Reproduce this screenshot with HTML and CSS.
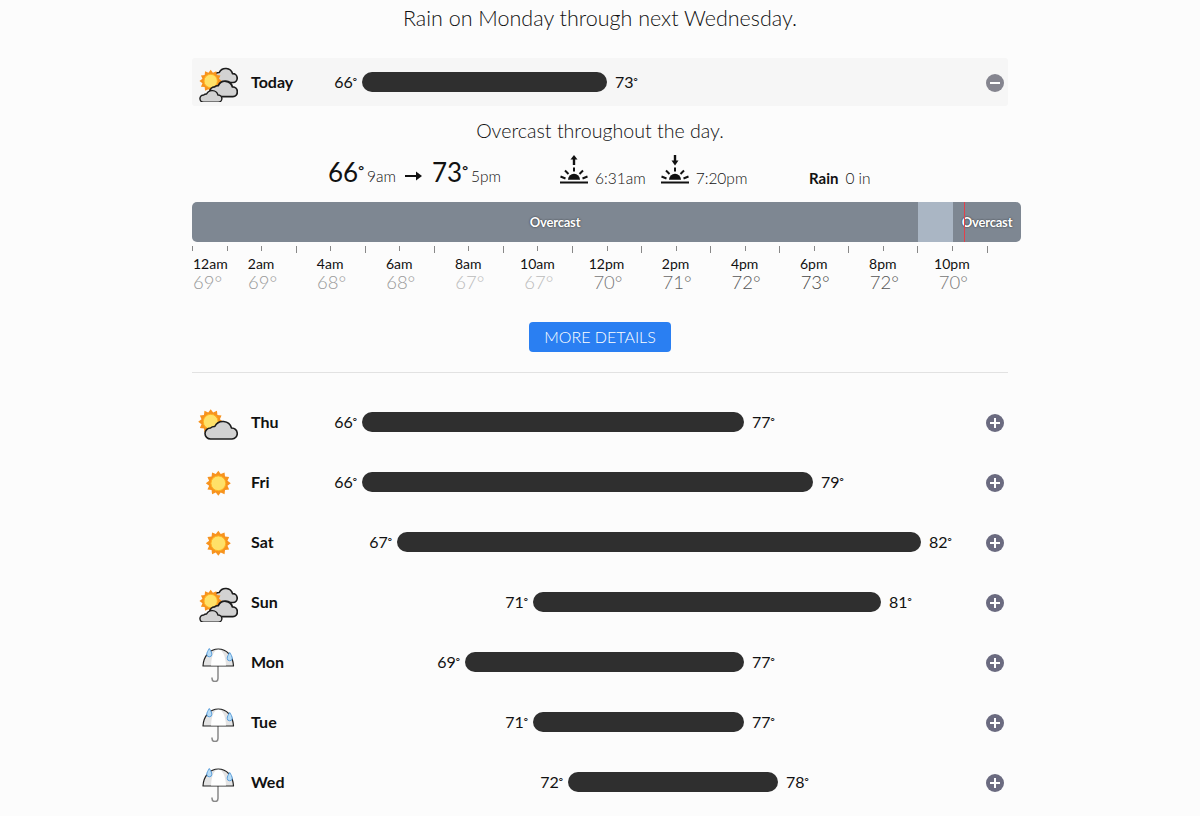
FILE: index.html
```html
<!DOCTYPE html>
<html lang="en">
<head>
    <meta charset="UTF-8">
    <title>Forecast</title>
    <link rel="stylesheet" href="styles.css">
</head>
<body>
    <svg class="defs" width="0" height="0">
        <defs>
            <polygon id="spikes" points="12.5,0 9.18,2.46 10.83,6.25 6.72,6.72 6.25,10.83 2.46,9.18 0,12.5 -2.46,9.18 -6.25,10.83 -6.72,6.72 -10.83,6.25 -9.18,2.46 -12.5,0 -9.18,-2.46 -10.83,-6.25 -6.72,-6.72 -6.25,-10.83 -2.46,-9.18 0,-12.5 2.46,-9.18 6.25,-10.83 6.72,-6.72 10.83,-6.25 9.18,-2.46"/>
            <g id="sun">
                <use href="#spikes" fill="#f7931e"/>
                <circle r="7.4" fill="#ffe168" stroke="#ffb21e"/>
            </g>
            <path id="cloud" d="M6 20H27.500A5.500 5.500 0 0 0 27 9A9 9 0 0 0 10.300 7.500A5.600 5.600 0 0 0 6 9A5.500 5.500 0 0 0 6 20Z" fill="#d2d2d2" stroke="#1c1c1c" stroke-width="1.6" stroke-linejoin="round"/>
            <path id="cloud-thick" d="M6 20H27.500A5.500 5.500 0 0 0 27 9A9 9 0 0 0 10.300 7.500A5.600 5.600 0 0 0 6 9A5.500 5.500 0 0 0 6 20Z" fill="#d2d2d2" stroke="#1c1c1c" stroke-width="2.100" stroke-linejoin="round"/>
            <g id="partly">
                <use href="#sun" transform="translate(12.7 19.7)"/>
                <use href="#cloud" transform="translate(6.500 17)"/>
            </g>
            <g id="clear">
                <use href="#sun" transform="translate(20.3 21.3)"/>
            </g>
            <g id="mostly">
                <use href="#cloud-thick" transform="translate(13 4.500) scale(.8)"/>
                <use href="#sun" transform="translate(12.7 19) scale(.9)"/>
                <use href="#cloud-thick" transform="translate(11.500 17) scale(.85 .88)"/>
                <use href="#cloud-thick" transform="translate(1.600 27) scale(.68 .66)"/>
            </g>
            <g id="umbrella">
                <path d="M20 24V36.500A3 3 0 0 1 14 36.500V35.500" fill="none" stroke="#888" stroke-width="1.500"/>
                <path d="M5 24C5.500 14 12 7 20.300 7S35 14 35.500 24Z" fill="#e4e4e4" stroke="#222" stroke-width="1.200" stroke-linejoin="round"/>
                <path d="M13 23.400C13.500 14 16 7.800 20.300 7.800S27.500 14 28 23.400Z" fill="#fff"/>
                <path d="M11.300 6.500C9.800 9 8.800 10.500 8.800 12.300A2.500 2.500 0 0 0 13.800 12.300C13.800 10.500 12.800 9 11.300 6.500Z" fill="#b9dcf5" stroke="#5a9fdc"/>
                <path d="M31.700 10.500C30.200 13 29.200 14.500 29.200 16.300A2.500 2.500 0 0 0 34.200 16.300C34.200 14.500 33.200 13 31.700 10.500Z" fill="#b9dcf5" stroke="#5a9fdc"/>
            </g>
            <g id="horizon">
                <path d="M0 27.500H28" stroke="#111" stroke-width="2"/>
                <path d="M8 24.800A6 6 0 0 1 20 24.800Z" fill="#111"/>
                <path d="M14 12.500V16.500M5 15.500L8.500 19M23 15.500L19.500 19M.5 21.500L5.500 23.500M27.500 21.500L22.500 23.500" stroke="#111" stroke-width="2"/>
            </g>
        </defs>
    </svg>

    <h1 class="headline">Rain on Monday through next Wednesday.</h1>

    <div class="forecast">
        <div class="day-row today-row">
            <svg class="wx-icon"><use href="#mostly"/></svg>
            <span class="day-name">Today</span>
            <span class="temp low" style="width:57px">66<i>°</i></span>
            <span class="bar" style="width:245px"></span>
            <span class="temp high">73<i>°</i></span>
            <span class="toggle minus"></span>
        </div>

        <div class="details">
            <p class="day-summary">Overcast throughout the day.</p>

            <div class="stats">
                <div class="stat-temps">
                    <span class="big-temp">66<i>°</i></span>
                    <span class="stat-time">9am</span>
                    <svg class="arrow" width="17" height="12"><path d="M0 6H14" stroke="#111" stroke-width="2"/><path d="M11 1.500L17 6L11 10.500Z" fill="#111"/></svg>
                    <span class="big-temp">73<i>°</i></span>
                    <span class="stat-time">5pm</span>
                </div>
                <div class="stat-sun">
                    <svg class="sun-icon"><use href="#horizon"/><path d="M14 10V3" stroke="#111" stroke-width="2.400"/><path d="M10.500 4.500L14 0L17.500 4.500Z" fill="#111"/></svg>
                    <span class="stat-time">6:31am</span>
                    <svg class="sun-icon sunset"><use href="#horizon"/><path d="M14 0V7" stroke="#111" stroke-width="2.400"/><path d="M10.500 5.500L14 10.500L17.500 5.500Z" fill="#111"/></svg>
                    <span class="stat-time">7:20pm</span>
                </div>
                <div class="stat-rain">
                    <b>Rain</b>
                    <span class="stat-time">0 in</span>
                </div>
            </div>

            <div class="timeline">
                <div class="segments">
                    <div class="segment dark" style="width:726px">Overcast</div>
                    <div class="segment light" style="width:35px"></div>
                    <div class="segment dark" style="width:68px">Overcast</div>
                    <span class="now-line"></span>
                </div>
                <div class="ticks">
                    <span class="tick"></span><span class="tick"></span><span class="tick"></span><span class="tick tall"></span>
                    <span class="tick"></span><span class="tick tall"></span><span class="tick"></span><span class="tick tall"></span>
                    <span class="tick"></span><span class="tick tall"></span><span class="tick"></span><span class="tick tall"></span>
                    <span class="tick"></span><span class="tick tall"></span><span class="tick"></span><span class="tick tall"></span>
                    <span class="tick"></span><span class="tick tall"></span><span class="tick"></span><span class="tick tall"></span>
                    <span class="tick"></span><span class="tick tall"></span><span class="tick"></span><span class="tick tall"></span>
                </div>
                <div class="hours">
                    <div class="hour first"><span>12am</span><b class="shade-a">69°</b></div>
                    <div class="hour"><span>2am</span><b class="shade-a">69°</b></div>
                    <div class="hour"><span>4am</span><b class="shade-a">68°</b></div>
                    <div class="hour"><span>6am</span><b class="shade-a">68°</b></div>
                    <div class="hour"><span>8am</span><b class="shade-b">67°</b></div>
                    <div class="hour"><span>10am</span><b class="shade-b">67°</b></div>
                    <div class="hour"><span>12pm</span><b class="shade-c">70°</b></div>
                    <div class="hour"><span>2pm</span><b class="shade-d">71°</b></div>
                    <div class="hour"><span>4pm</span><b class="shade-e">72°</b></div>
                    <div class="hour"><span>6pm</span><b class="shade-f">73°</b></div>
                    <div class="hour"><span>8pm</span><b class="shade-e">72°</b></div>
                    <div class="hour"><span>10pm</span><b class="shade-c">70°</b></div>
                </div>
            </div>

            <div class="more-wrap"><button class="more-btn">MORE DETAILS</button></div>
        </div>

        <hr class="divider">

        <div class="day-row">
            <svg class="wx-icon"><use href="#partly"/></svg>
            <span class="day-name">Thu</span>
            <span class="temp low" style="width:57px">66<i>°</i></span>
            <span class="bar" style="width:382px"></span>
            <span class="temp high">77<i>°</i></span>
            <span class="toggle plus"></span>
        </div>
        <div class="day-row">
            <svg class="wx-icon"><use href="#clear"/></svg>
            <span class="day-name">Fri</span>
            <span class="temp low" style="width:57px">66<i>°</i></span>
            <span class="bar" style="width:451px"></span>
            <span class="temp high">79<i>°</i></span>
            <span class="toggle plus"></span>
        </div>
        <div class="day-row">
            <svg class="wx-icon"><use href="#clear"/></svg>
            <span class="day-name">Sat</span>
            <span class="temp low" style="width:92px">67<i>°</i></span>
            <span class="bar" style="width:524px"></span>
            <span class="temp high">82<i>°</i></span>
            <span class="toggle plus"></span>
        </div>
        <div class="day-row">
            <svg class="wx-icon"><use href="#mostly"/></svg>
            <span class="day-name">Sun</span>
            <span class="temp low" style="width:228px">71<i>°</i></span>
            <span class="bar" style="width:348px"></span>
            <span class="temp high">81<i>°</i></span>
            <span class="toggle plus"></span>
        </div>
        <div class="day-row">
            <svg class="wx-icon"><use href="#umbrella"/></svg>
            <span class="day-name">Mon</span>
            <span class="temp low" style="width:160px">69<i>°</i></span>
            <span class="bar" style="width:279px"></span>
            <span class="temp high">77<i>°</i></span>
            <span class="toggle plus"></span>
        </div>
        <div class="day-row">
            <svg class="wx-icon"><use href="#umbrella"/></svg>
            <span class="day-name">Tue</span>
            <span class="temp low" style="width:228px">71<i>°</i></span>
            <span class="bar" style="width:211px"></span>
            <span class="temp high">77<i>°</i></span>
            <span class="toggle plus"></span>
        </div>
        <div class="day-row">
            <svg class="wx-icon"><use href="#umbrella"/></svg>
            <span class="day-name">Wed</span>
            <span class="temp low" style="width:263px">72<i>°</i></span>
            <span class="bar" style="width:210px"></span>
            <span class="temp high">78<i>°</i></span>
            <span class="toggle plus"></span>
        </div>
    </div>
</body>
</html>
```

FILE: styles.css
```css
body {
    margin: 0;
    background-color: #fcfcfc;
    color: #111;
    font-family: Lato, "Open Sans", sans-serif;
}
.defs {
    display: block;
    height: 0;
}
.headline {
    margin: 0 0 22px;
    font-size: 21.5px;
    font-weight: 300;
    line-height: 36px;
    text-align: center;
}
.forecast {
    width: 816px;
    margin: 0 auto;
}

/* day rows */
.day-row {
    display: flex;
    align-items: center;
    height: 60px;
    padding-right: 4px;
}
.today-row {
    height: 48px;
    background-color: #f6f6f6;
    border-radius: 3px;
}
.wx-icon {
    flex: none;
    width: 40px;
    height: 40px;
    margin: 0 13px 0 6px;
}
.day-name {
    width: 49px;
    margin-top: -2px;
    font-size: 16px;
    font-weight: 700;
}
.temp {
    margin-top: -2px;
    font-size: 16px;
    white-space: nowrap;
}
.temp i {
    font-style: normal;
    font-size: 10px;
    font-weight: 700;
    vertical-align: 3px;
}
.low {
    margin-right: 5px;
    text-align: right;
}
.high {
    margin-left: 8px;
}
.bar {
    height: 20px;
    background-color: #2f2f2f;
    border-radius: 10px;
}
.toggle {
    position: relative;
    flex: none;
    width: 18px;
    height: 18px;
    margin-top: 2px;
    margin-left: auto;
    background-color: #6b6b80;
    border-radius: 50%;
}
.toggle::before {
    content: "";
    position: absolute;
    top: 8px;
    left: 4px;
    width: 10px;
    height: 2px;
    background-color: #fff;
}
.toggle.plus::after {
    content: "";
    position: absolute;
    top: 4px;
    left: 8px;
    width: 2px;
    height: 10px;
    background-color: #fff;
}
.toggle.minus {
    background-color: #85858f;
}

/* today details */
.day-summary {
    margin: 0;
    padding-top: 10px;
    font-size: 19.6px;
    font-weight: 300;
    line-height: 30px;
    text-align: center;
}
.stats {
    display: flex;
    align-items: flex-end;
    height: 41px;
    padding-left: 136px;
    padding-bottom: 15px;
}
.stat-temps {
    display: flex;
    align-items: baseline;
    width: 232px;
}
.big-temp {
    font-size: 26px;
    font-weight: 400;
    line-height: 30px;
}
.big-temp i {
    font-style: normal;
    font-size: 14px;
    font-weight: 700;
    vertical-align: 7px;
}
.stat-time {
    margin-left: 3px;
    font-size: 15.5px;
    font-weight: 300;
}
.arrow {
    margin: 0 10px 0 9px;
}
.stat-sun {
    display: flex;
    align-items: flex-end;
    width: 249px;
}
.stat-sun .stat-time {
    margin-left: 4px;
}
.sun-icon {
    width: 28px;
    height: 30px;
    margin-right: 3px;
    margin-bottom: 2px;
}
.sunset {
    margin-left: 15px;
}
.stat-rain {
    display: flex;
    gap: 4px;
    align-items: baseline;
    font-size: 15px;
}

/* timeline */
.timeline {
    width: 829px;
}
.segments {
    position: relative;
    display: flex;
    height: 40px;
    border-radius: 5px;
    overflow: hidden;
}
.segment {
    display: flex;
    align-items: center;
    justify-content: center;
    color: #fff;
    font-size: 13px;
    font-weight: 700;
    letter-spacing: -.2px;
    text-shadow: 0 0 2px rgba(0, 0, 0, .7);
}
.segment.dark {
    background-color: #7e8792;
}
.segment.light {
    background-color: #aab6c4;
}
.now-line {
    position: absolute;
    top: 0;
    left: 772px;
    width: 1px;
    height: 40px;
    background-color: #e3404a;
}
.ticks {
    display: flex;
    align-items: flex-start;
    margin-top: 4px;
}
.tick {
    flex: 1;
    height: 5px;
    border-left: 1px solid #888;
}
.tick.tall {
    height: 7px;
}
.hours {
    display: flex;
    margin-top: 2px;
}
.hour {
    display: flex;
    flex: none;
    flex-direction: column;
    align-items: center;
    width: 69.08px;
    font-size: 14px;
    line-height: 17px;
    white-space: nowrap;
}
.hour.first {
    width: 34.54px;
    align-items: flex-start;
    padding-left: 1px;
    box-sizing: border-box;
}
.hour b {
    padding-left: 3px;
    font-size: 18.5px;
    font-weight: 300;
    line-height: 21px;
}
.hour.first b {
    padding-left: 0;
}
.shade-a { color: #999; }
.shade-b { color: #bbb; }
.shade-c { color: #777; }
.shade-d { color: #666; }
.shade-e { color: #555; }
.shade-f { color: #444; }

.more-wrap {
    display: flex;
    justify-content: center;
    margin-top: 29px;
}
.more-btn {
    height: 30px;
    width: 142px;
    padding: 0 0 2px;
    border: none;
    border-radius: 4px;
    background-color: #2a7ff2;
    color: #fff;
    font-family: inherit;
    font-size: 16px;
    font-weight: 300;
}
.divider {
    margin: 20px 0 19px;
    border: 0;
    border-top: 1px solid #e2e2e2;
}
```
